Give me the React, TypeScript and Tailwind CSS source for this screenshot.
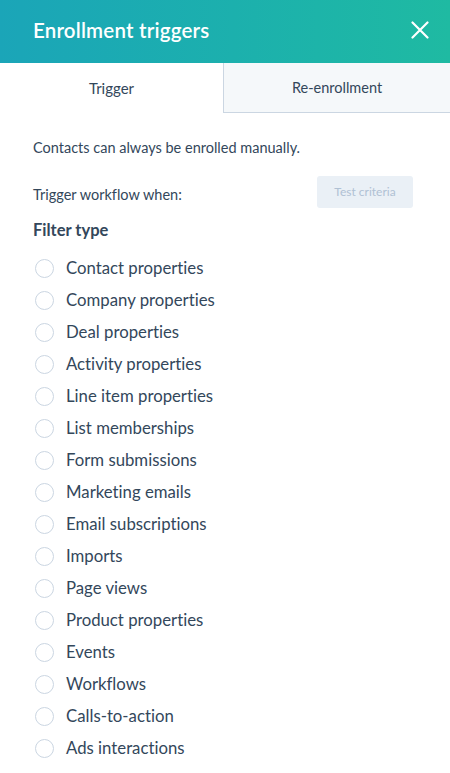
import React from 'react'

const filters = [
  'Contact properties',
  'Company properties',
  'Deal properties',
  'Activity properties',
  'Line item properties',
  'List memberships',
  'Form submissions',
  'Marketing emails',
  'Email subscriptions',
  'Imports',
  'Page views',
  'Product properties',
  'Events',
  'Workflows',
  'Calls-to-action',
  'Ads interactions',
]

export default function App() {
  return (
    <div className="w-[450px] h-[773px] overflow-hidden bg-white text-[#33475b] font-['Lato','Noto_Sans',sans-serif] [font-variant-ligatures:none]">
      {/* Header */}
      <div className="h-[63px] flex items-center justify-between pl-[33px] pr-[20px] bg-gradient-to-r from-[#1ba5b8] to-[#1fbaa2]">
        <h1 className="text-white text-[20.5px] font-semibold tracking-[0.2px] -mt-[3px]">Enrollment triggers</h1>
        <svg width="18" height="18" viewBox="0 0 18 18" className="mr-[1px] -mt-[3px]">
          <path d="M1.5 1.5 L16.5 16.5 M16.5 1.5 L1.5 16.5" stroke="white" strokeWidth="2.2" strokeLinecap="round" />
        </svg>
      </div>

      {/* Tabs */}
      <div className="flex h-[50px]">
        <div className="w-[223px] flex items-center justify-center text-[15px] bg-white">Trigger</div>
        <div className="flex-1 flex items-center justify-center text-[14.5px] bg-[#f5f8fa] border-l border-b border-[#cbd6e2]">
          Re-enrollment
        </div>
      </div>

      {/* Body */}
      <div className="pl-[33px] pr-[37px]">
        <p className="text-[14.5px] mt-[25px] leading-[20px]">Contacts can always be enrolled manually.</p>
        <div className="flex items-center justify-between mt-[18px]">
          <span className="text-[14.5px] pt-[6px]">Trigger workflow when:</span>
          <button className="w-[96px] h-[32px] rounded-[3px] bg-[#eaf0f6] text-[#b0c1d4] text-[12px]">Test criteria</button>
        </div>
        <h2 className="text-[16.5px] font-bold mt-[10px] leading-[24px]">Filter type</h2>
        <ul className="mt-[10px]">
          {filters.map((f) => (
            <li key={f} className="h-[32px] flex items-center gap-[12px]">
              <span className="w-[19px] h-[19px] ml-[2px] rounded-full border-[1.5px] border-[#cbd6e2] bg-white" />
              <span className="text-[16.75px]">{f}</span>
            </li>
          ))}
        </ul>
      </div>
    </div>
  )
}
